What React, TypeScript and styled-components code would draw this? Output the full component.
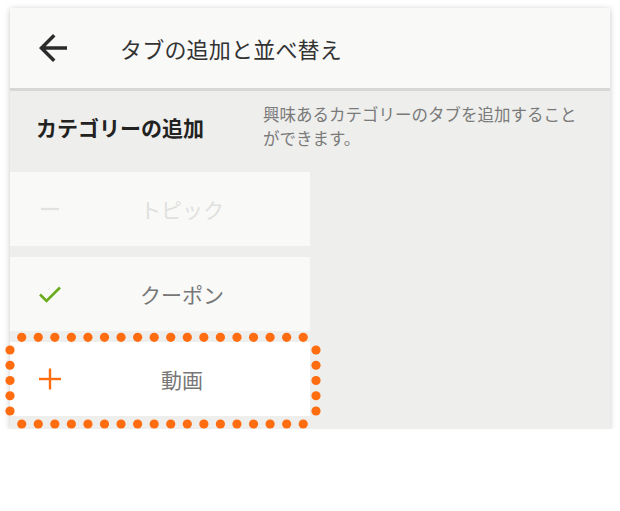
import styled, { createGlobalStyle } from "styled-components";

const GlobalStyle = createGlobalStyle`
  body {
    margin: 0;
    background: #ffffff;
    font-family: "Noto Sans CJK JP", "Noto Sans", sans-serif;
  }
`;

const Page = styled.div`
  padding: 8px 10px 0;
`;

const Card = styled.div`
  width: 600px;
  height: 421px;
  background: #eeeeec;
  box-shadow: 0 1px 6px rgba(0, 0, 0, 0.22);
  display: flex;
  flex-direction: column;
`;

const Header = styled.header`
  height: 80px;
  background: #f9f9f8;
  border-bottom: 3px solid #d7d7d5;
  display: flex;
  align-items: center;
`;

const BackButton = styled.button`
  border: 0;
  padding: 0;
  margin-left: 29px;
  width: 28px;
  height: 28px;
  background: none;
  display: flex;
  align-items: center;
  justify-content: center;
  color: #2b2b2b;
`;

const Title = styled.h1`
  margin: 0 0 0 53px;
  font-size: 22px;
  font-weight: 400;
  color: #333333;
  letter-spacing: 0.2px;
`;

const Section = styled.div`
  height: 81px;
  box-sizing: border-box;
  padding-top: 11px;
  display: grid;
  grid-template-columns: 253px 1fr;
  align-items: start;
`;

const Heading = styled.h2`
  margin: 0;
  padding: 10px 0 0 26px;
  font-size: 21px;
  line-height: 30px;
  font-weight: 700;
  color: #222222;
`;

const Description = styled.p`
  margin: 0;
  padding-right: 26px;
  font-size: 16.5px;
  line-height: 24px;
  color: #7a7a7a;
`;

const RowList = styled.div`
  width: 300px;
  display: flex;
  flex-direction: column;
  gap: 11px;
`;

const Row = styled.div<{ $bg: string }>`
  position: relative;
  height: 74px;
  background: ${(p) => p.$bg};
  display: flex;
  align-items: center;
`;

const IconSlot = styled.span`
  width: 36px;
  margin-left: 22px;
  display: flex;
  justify-content: center;
`;

const Label = styled.span<{ $color: string }>`
  flex: 1;
  padding-right: 14px;
  text-align: center;
  font-size: 21px;
  color: ${(p) => p.$color};
`;

const Highlight = styled.svg`
  position: absolute;
  left: -6px;
  top: -11px;
  width: 318px;
  height: 99px;
  overflow: visible;
  pointer-events: none;
`;

const ORANGE = "#ff6d10";

const MinusIcon = () => (
  <svg width="22" height="22" viewBox="0 0 22 22">
    <line x1="2" y1="11" x2="20" y2="11" stroke="#e2e2e0" strokeWidth="2.2" />
  </svg>
);

const CheckIcon = () => (
  <svg width="24" height="20" viewBox="0 0 24 20">
    <path d="M2 10.5 L8.5 17 L22 3.5" fill="none" stroke="#6aac1e" strokeWidth="2.6" />
  </svg>
);

const PlusIcon = () => (
  <svg width="24" height="24" viewBox="0 0 24 24">
    <line x1="1" y1="12" x2="23" y2="12" stroke={ORANGE} strokeWidth="2.4" />
    <line x1="12" y1="1.5" x2="12" y2="22.5" stroke={ORANGE} strokeWidth="2.4" />
  </svg>
);

const DottedFrame = () => {
  const across = Array.from({ length: 18 }, (_, i) => 17.7 + i * 16.56);
  const down = Array.from({ length: 5 }, (_, i) => 19 + i * 15.25);
  return (
    <Highlight viewBox="0 0 318 99">
      {across.map((x) => (
        <g key={`h${x}`}>
          <circle cx={x} cy={6.3} r={4.6} fill={ORANGE} />
          <circle cx={x} cy={93} r={4.6} fill={ORANGE} />
        </g>
      ))}
      {down.map((y) => (
        <g key={`v${y}`}>
          <circle cx={6} cy={y} r={4.6} fill={ORANGE} />
          <circle cx={312} cy={y} r={4.6} fill={ORANGE} />
        </g>
      ))}
    </Highlight>
  );
};

export default function App() {
  return (
    <>
      <GlobalStyle />
      <Page>
        <Card>
          <Header>
            <BackButton aria-label="戻る">
              <svg width="28" height="28" viewBox="4 4 16 16">
                <path
                  d="M20 11H7.83l5.59-5.59L12 4l-8 8 8 8 1.41-1.41L7.83 13H20v-2z"
                  fill="currentColor"
                />
              </svg>
            </BackButton>
            <Title>タブの追加と並べ替え</Title>
          </Header>
          <Section>
            <Heading>カテゴリーの追加</Heading>
            <Description>
              興味あるカテゴリーのタブを追加することができます。
            </Description>
          </Section>
          <RowList>
            <Row $bg="#f9f9f7">
              <IconSlot>
                <MinusIcon />
              </IconSlot>
              <Label $color="#e0e0de">トピック</Label>
            </Row>
            <Row $bg="#f9f9f7">
              <IconSlot>
                <CheckIcon />
              </IconSlot>
              <Label $color="#777777">クーポン</Label>
            </Row>
            <Row $bg="#ffffff">
              <IconSlot>
                <PlusIcon />
              </IconSlot>
              <Label $color="#777777">動画</Label>
              <DottedFrame />
            </Row>
          </RowList>
        </Card>
      </Page>
    </>
  );
}
